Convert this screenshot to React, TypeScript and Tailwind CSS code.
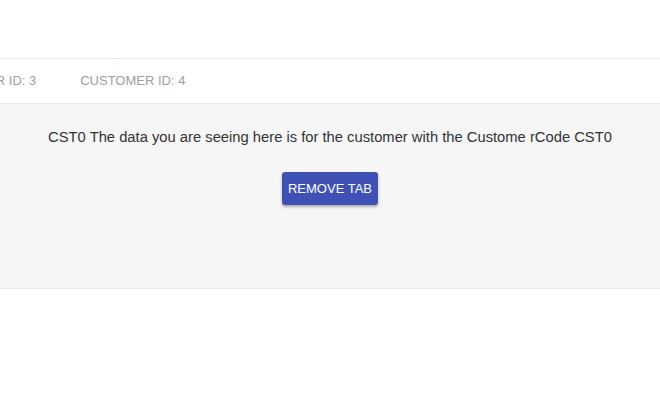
export default function App() {
  const tabs = ['CUSTOMER ID: 3', 'CUSTOMER ID: 4'];

  return (
    <div className="w-[660px] h-[400px] bg-white overflow-hidden font-['Liberation_Sans',Arial,sans-serif]">
      {/* top blank area */}
      <div className="h-[58px]" />

      {/* tab strip, scrolled so the first tab is cut off */}
      <div className="h-[46px] border-t border-b border-[#e6e6e6] overflow-hidden flex items-center">
        <div className="flex -ml-[91px]">
          {tabs.map((t) => (
            <div key={t} className="px-[22px] text-[13px] text-[#9e9e9e] whitespace-nowrap">
              {t}
            </div>
          ))}
        </div>
      </div>

      {/* tab content */}
      <div className="h-[185px] bg-[#f6f6f6] border-b border-[#e6e6e6] flex flex-col items-center pt-[22px]">
        <p className="text-[14.75px] text-[#333] whitespace-nowrap">
          CST0 The data you are seeing here is for the customer with the Custome rCode CST0
        </p>
        <button className="mt-[24px] w-[96px] h-[33px] rounded-[3px] bg-[#3f51b5] text-white text-[13px] shadow-[0_2px_3px_rgba(0,0,0,0.3)]">
          REMOVE TAB
        </button>
      </div>
    </div>
  );
}
